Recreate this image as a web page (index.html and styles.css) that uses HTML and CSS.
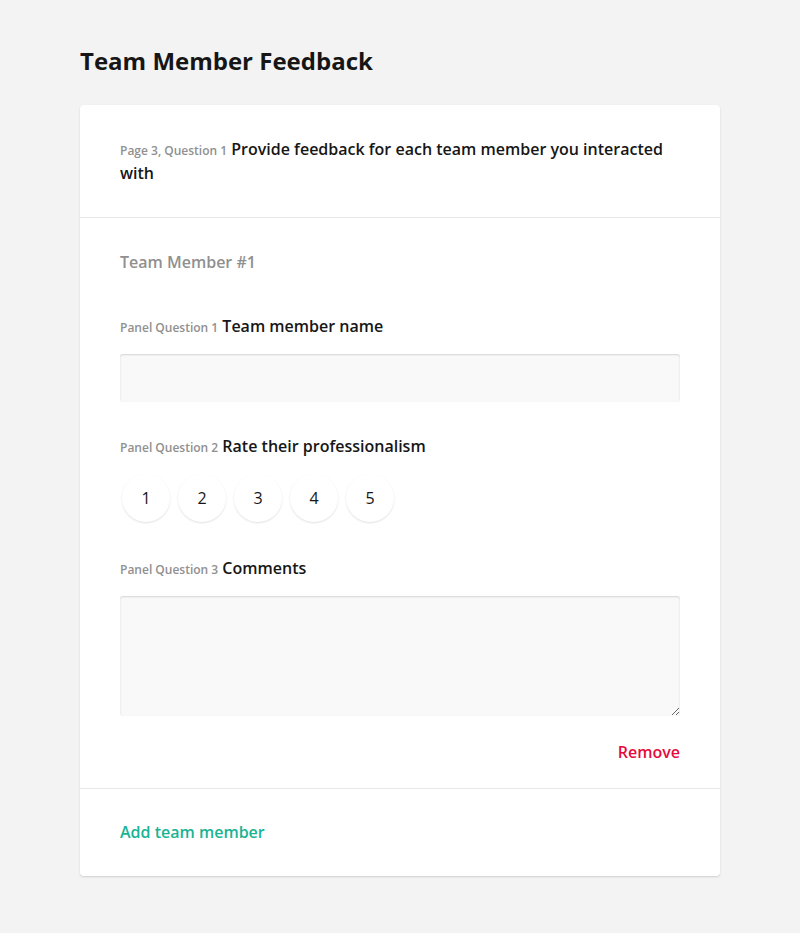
FILE: index.html
```html
<!DOCTYPE html>
<html>
<head>
<meta charset="utf-8">
<link rel="stylesheet" href="styles.css">
</head>
<body>
<div class="page">
  <h1 class="survey-title">Team Member Feedback</h1>
  <div class="card">
    <div class="q-header">
      <h5 class="q-title"><span class="num">Page 3, Question 1</span> Provide feedback for each team member you interacted with</h5>
    </div>
    <div class="panel">
      <h4 class="panel-title">Team Member #1</h4>
      <div class="pq">
        <h5 class="q-title"><span class="num">Panel Question 1</span> Team member name</h5>
        <input class="text-input" type="text">
      </div>
      <div class="pq">
        <h5 class="q-title"><span class="num">Panel Question 2</span> Rate their professionalism</h5>
        <div class="rating">
          <div class="rate">1</div>
          <div class="rate">2</div>
          <div class="rate">3</div>
          <div class="rate">4</div>
          <div class="rate">5</div>
        </div>
      </div>
      <div class="pq">
        <h5 class="q-title"><span class="num">Panel Question 3</span> Comments</h5>
        <textarea class="comment"></textarea>
      </div>
      <div class="remove-row"><span class="remove">Remove</span></div>
    </div>
    <div class="footer">
      <span class="add">Add team member</span>
    </div>
  </div>
</div>
</body>
</html>
```

FILE: styles.css
```css
html, body {
  margin: 0;
  padding: 0;
  background: #f3f3f3;
  font-family: "Open Sans", "Noto Sans", sans-serif;
  color: #161616;
}
.page {
  padding: 45px 80px 57px;
}
.survey-title {
  margin: 0 0 28px;
  font-size: 24px;
  line-height: 32px;
  font-weight: 700;
  color: #161616;
}
.card {
  background: #fff;
  border-radius: 4px;
  box-shadow: 0 1px 2px rgba(0,0,0,0.15);
}
.q-header {
  padding: 32px 40px;
  border-bottom: 1px solid #e8e8e8;
}
.q-title {
  margin: 0;
  font-size: 16px;
  line-height: 24px;
  font-weight: 600;
  color: #161616;
}
.num {
  font-size: 12px;
  line-height: 12px;
  font-weight: 600;
  color: #909090;
}
.panel {
  padding: 32px 40px 24px;
  border-bottom: 1px solid #e8e8e8;
}
.panel-title {
  margin: 0;
  font-size: 16px;
  line-height: 24px;
  font-weight: 600;
  color: #909090;
}
.pq {
  margin-top: 40px;
}
.pq + .pq {
  margin-top: 32px;
}
.text-input {
  display: block;
  box-sizing: border-box;
  width: 100%;
  height: 48px;
  margin-top: 16px;
  border: none;
  border-radius: 3px;
  background: #f9f9f9;
  box-shadow: inset 0 1px 2px rgba(0,0,0,0.15);
  outline: none;
}
.rating {
  display: flex;
  gap: 8px;
  margin-top: 16px;
  padding: 0 0 2px 2px;
}
.rate {
  width: 48px;
  height: 48px;
  border-radius: 50%;
  background: #fff;
  box-shadow: 0 1px 2px rgba(0,0,0,0.12);
  display: flex;
  align-items: center;
  justify-content: center;
  font-size: 16px;
  color: #161616;
}
.comment {
  display: block;
  box-sizing: border-box;
  width: 100%;
  height: 120px;
  margin: 16px 0 0;
  border: none;
  border-radius: 3px;
  background: #f9f9f9;
  box-shadow: inset 0 1px 2px rgba(0,0,0,0.15);
  outline: none;
  resize: vertical;
}
.remove-row {
  display: flex;
  justify-content: flex-end;
  margin-top: 24px;
}
.remove {
  font-size: 16px;
  line-height: 24px;
  font-weight: 600;
  color: #e60a3e;
}
.footer {
  padding: 31px 40px 32px;
}
.add {
  font-size: 16px;
  line-height: 24px;
  font-weight: 600;
  color: #19b394;
}
```
